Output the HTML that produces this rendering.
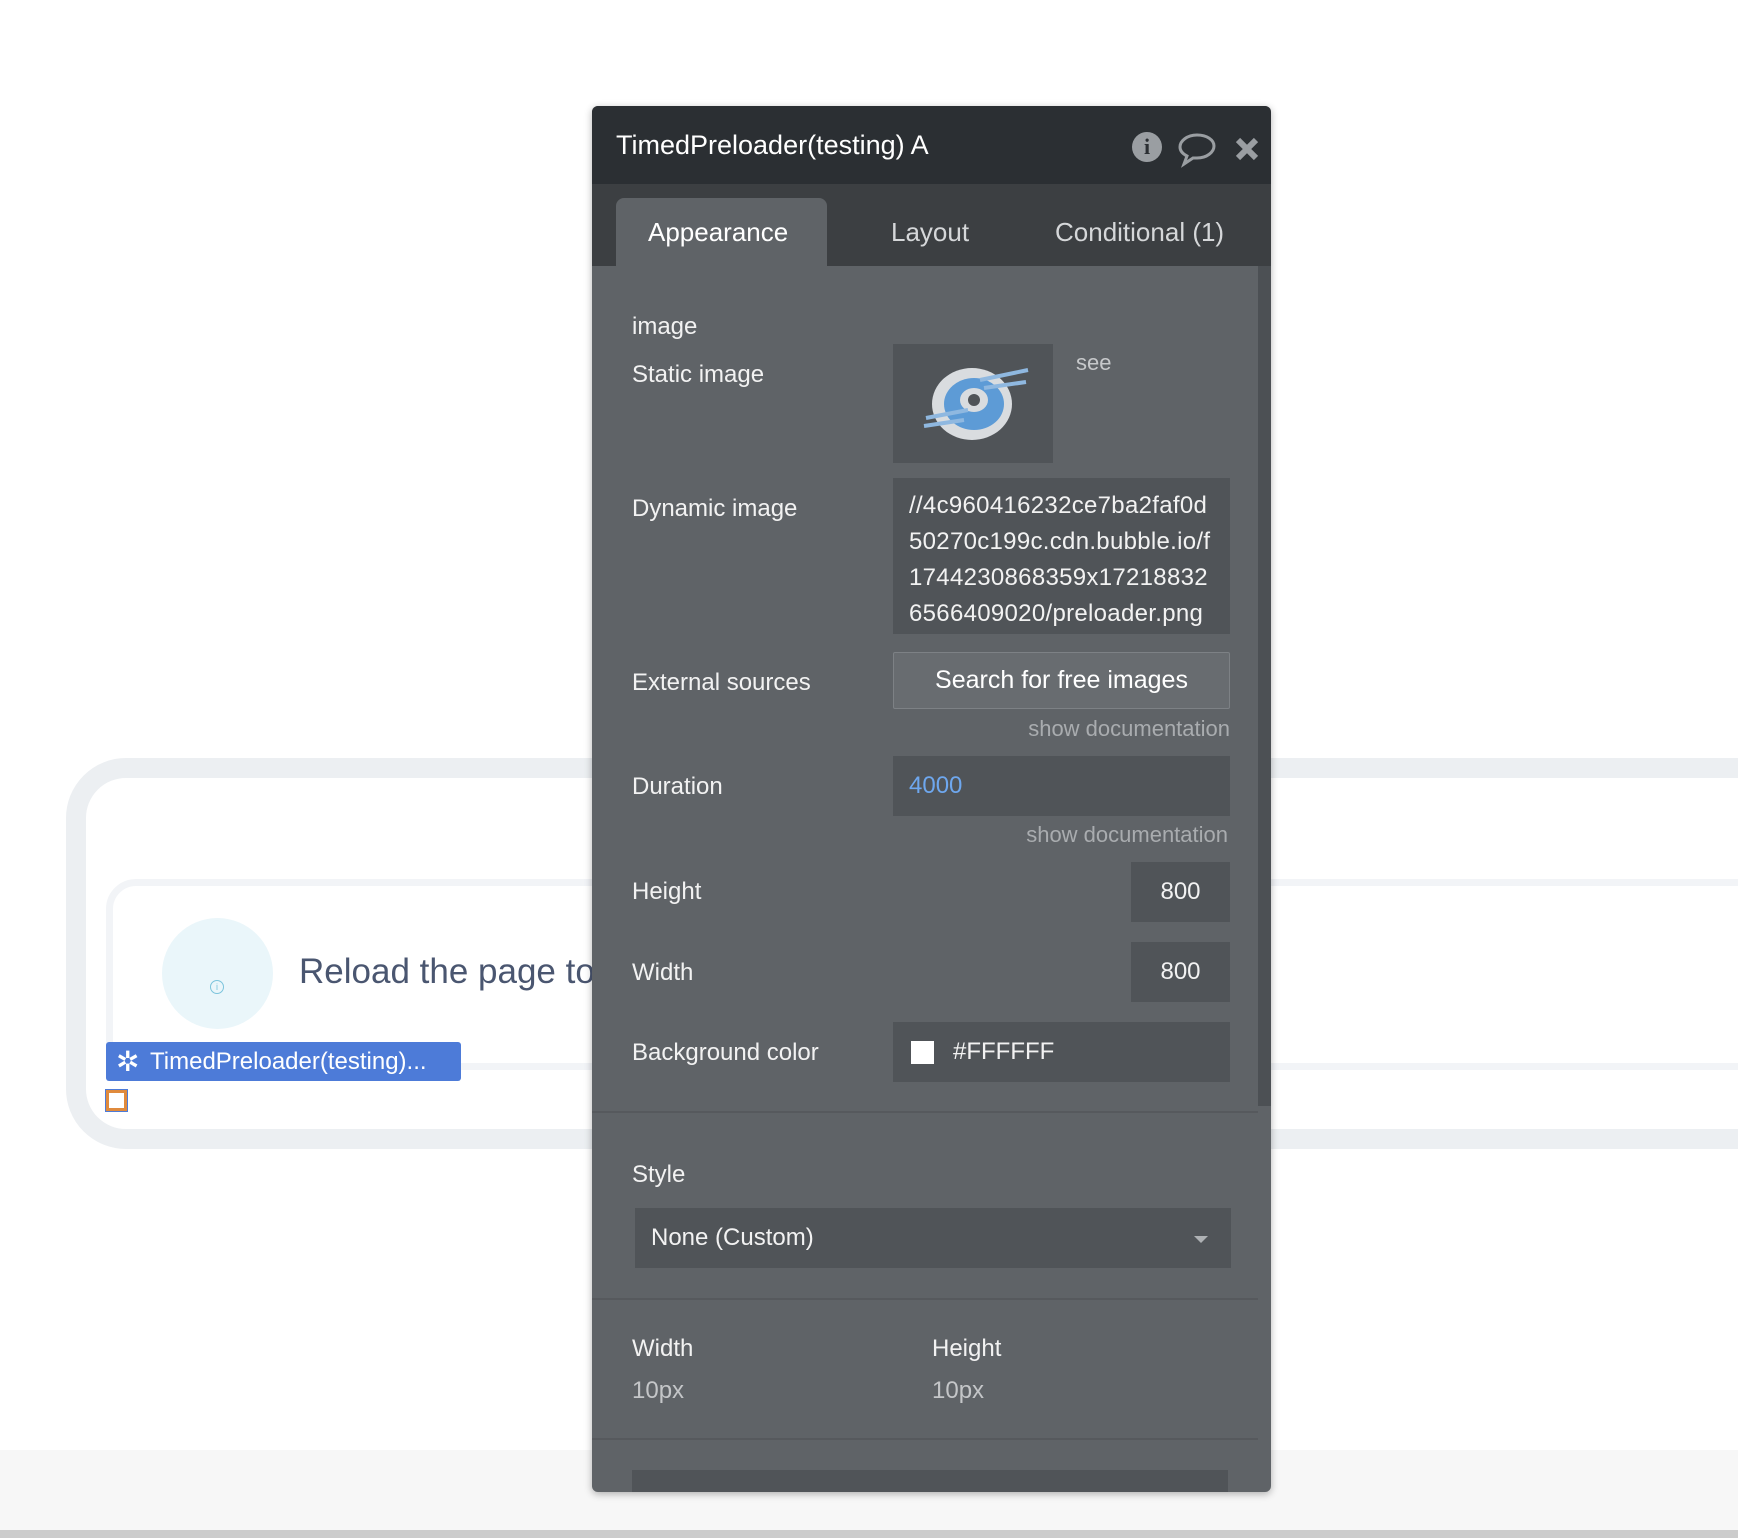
<!DOCTYPE html>
<html><head><meta charset="utf-8"><style>
*{box-sizing:border-box;margin:0;padding:0}
body{width:1738px;height:1538px;background:#fff;position:relative;overflow:hidden;font-family:"Liberation Sans",sans-serif}
.a{position:absolute}
.lbl{position:absolute;left:40px;color:#f2f2f2;font-size:24px;line-height:30px}
.box{position:absolute;background:#505458}
.doc{position:absolute;color:#a9acaf;font-size:22px;text-align:right}
</style></head><body>
<div class="a" style="left:0;top:1450px;width:1738px;height:80px;background:#f7f7f7"></div>
<div class="a" style="left:0;top:1530px;width:1738px;height:8px;background:#ccc"></div>
<div class="a" style="left:66px;top:758px;width:1800px;height:391px;border:20px solid #eceff2;border-radius:60px"></div>
<div class="a" style="left:106px;top:879px;width:1800px;height:191px;border:7px solid #f2f4f7;border-radius:30px"></div>
<div class="a" style="left:162px;top:918px;width:111px;height:111px;border-radius:50%;background:#eaf6fa"></div>
<div class="a" style="left:210px;top:980px;width:14px;height:14px;border:1px solid #7cc4dc;border-radius:50%;font-size:9px;color:#7cc4dc;text-align:center;line-height:12px">i</div>
<div class="a" style="left:299px;top:952px;font-size:35px;color:#4a5670;white-space:nowrap">Reload the page to</div>
<div class="a" style="left:106px;top:1042px;width:355px;height:39px;background:#4d7bd8;border-radius:3px;color:#fff;font-size:24px;line-height:39px;padding-left:44px">TimedPreloader(testing)...</div>
<div class="a" style="left:116px;top:1050px;color:#fff;font-size:28px;line-height:24px">✲</div>
<div class="a" style="left:106px;top:1090px;width:21px;height:21px;border:3px solid #e08a3c;outline:1px solid #4d7bd8;background:#fff"></div>

<div class="a" style="left:592px;top:106px;width:679px;height:1386px;background:#5f6367;border-radius:6px;overflow:hidden;box-shadow:0 2px 8px rgba(0,0,0,.3)">
 <div class="a" style="left:0;top:0;width:679px;height:78px;background:#2b2f33"></div>
 <div class="a" style="left:24px;top:22px;color:#fff;font-size:27px;line-height:34px">TimedPreloader(testing) A</div>
 <div class="a" style="left:540px;top:26px;width:30px;height:30px;border-radius:50%;background:#9a9ea2;color:#2b2f33;font-weight:bold;font-size:22px;text-align:center;line-height:30px;font-family:'Liberation Serif',serif">i</div>
 <svg class="a" style="left:585px;top:26px" width="40" height="36" viewBox="0 0 40 36"><path d="M20 3C10 3 3 9 3 15c0 4 3 7 7 9l-3 8 9-6c1 0 3 0 4 0 10 0 17-6 17-12S30 3 20 3z" fill="none" stroke="#9a9ea2" stroke-width="3"/></svg>
 <svg class="a" style="left:642px;top:30px" width="26" height="26" viewBox="0 0 26 26"><path d="M4 4L22 22M22 4L4 22" stroke="#9a9ea2" stroke-width="6"/></svg>
 <div class="a" style="left:0;top:78px;width:679px;height:82px;background:#3c3f42"></div>
 <div class="a" style="left:24px;top:92px;width:211px;height:68px;background:#5f6367;border-radius:8px 8px 0 0"></div>
 <div class="a" style="left:56px;top:111px;color:#fff;font-size:26px">Appearance</div>
 <div class="a" style="left:299px;top:111px;color:#d5d7d9;font-size:26px">Layout</div>
 <div class="a" style="left:463px;top:111px;color:#d5d7d9;font-size:26px">Conditional (1)</div>
 <div class="a" style="left:666px;top:160px;width:13px;height:840px;background:#4c5054"></div>

 <div class="lbl" style="top:206px">image</div>
 <div class="lbl" style="top:254px">Static image</div>
 <div class="box" style="left:301px;top:238px;width:160px;height:119px"></div>
 <svg class="a" style="left:328px;top:254px" width="110" height="86" viewBox="0 0 110 86"><ellipse cx="52" cy="44" rx="40" ry="36" fill="#d9dcdf"/><ellipse cx="54" cy="44" rx="30" ry="26" fill="#5d9bd6"/><ellipse cx="54" cy="40" rx="14" ry="12" fill="#d9dcdf"/><ellipse cx="54" cy="40" rx="6" ry="6" fill="#505458"/><path d="M60 20L108 10M64 28L106 22M6 58L48 50M4 66L44 60" stroke="#8fb8e0" stroke-width="4"/></svg>
 <div class="a" style="left:484px;top:244px;color:#c6c8ca;font-size:22px">see</div>

 <div class="lbl" style="top:388px">Dynamic image</div>
 <div class="box" style="left:301px;top:372px;width:337px;height:156px;padding:10px 0 0 16px;color:#f2f2f2;font-size:24px;letter-spacing:0.3px;line-height:36px;white-space:nowrap;overflow:hidden">//4c960416232ce7ba2faf0d<br>50270c199c.cdn.bubble.io/f<br>1744230868359x17218832<br>6566409020/preloader.png</div>

 <div class="lbl" style="top:562px">External sources</div>
 <div class="a" style="left:301px;top:546px;width:337px;height:57px;background:#686c70;border:1px solid #7d8185;border-radius:2px;color:#fff;font-size:25px;text-align:center;line-height:55px">Search for free images</div>
 <div class="doc" style="right:41px;top:610px">show documentation</div>

 <div class="lbl" style="top:666px">Duration</div>
 <div class="box" style="left:301px;top:650px;width:337px;height:60px;color:#6ea7ee;font-size:24px;line-height:60px;padding-left:16px">4000</div>
 <div class="doc" style="right:43px;top:716px">show documentation</div>

 <div class="lbl" style="top:771px">Height</div>
 <div class="box" style="left:539px;top:756px;width:99px;height:60px;color:#f2f2f2;font-size:24px;line-height:60px;text-align:center">800</div>
 <div class="lbl" style="top:852px">Width</div>
 <div class="box" style="left:539px;top:836px;width:99px;height:60px;color:#f2f2f2;font-size:24px;line-height:60px;text-align:center">800</div>

 <div class="lbl" style="top:932px">Background color</div>
 <div class="box" style="left:301px;top:916px;width:337px;height:60px;color:#f2f2f2;font-size:24px;line-height:60px;padding-left:60px">#FFFFFF</div>
 <div class="a" style="left:319px;top:935px;width:23px;height:23px;background:#fff"></div>

 <div class="a" style="left:0;top:1005px;width:666px;height:2px;background:#56595d"></div>
 <div class="lbl" style="top:1054px">Style</div>
 <div class="box" style="left:43px;top:1102px;width:596px;height:60px;color:#f2f2f2;font-size:24px;line-height:60px;padding-left:16px">None (Custom)</div>
 <div class="a" style="left:602px;top:1130px;border-left:7px solid transparent;border-right:7px solid transparent;border-top:7px solid #aeb1b4"></div>
 <div class="a" style="left:0;top:1192px;width:666px;height:2px;background:#56595d"></div>
 <div class="lbl" style="top:1228px">Width</div>
 <div class="lbl" style="top:1228px;left:340px">Height</div>
 <div class="lbl" style="top:1270px;color:#c4c6c8">10px</div>
 <div class="lbl" style="top:1270px;left:340px;color:#c4c6c8">10px</div>
 <div class="a" style="left:0;top:1332px;width:666px;height:2px;background:#56595d"></div>
 <div class="a" style="left:40px;top:1364px;width:596px;height:40px;background:#505458"></div>
</div>
</body></html>
